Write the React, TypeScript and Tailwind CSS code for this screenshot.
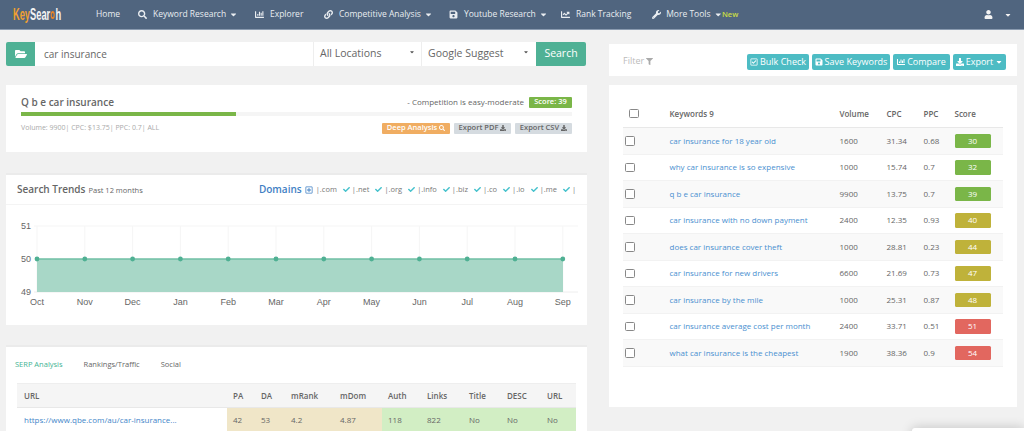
import React from "react";
import {
  FaCaretDown,
  FaChartBar,
  FaChartLine,
  FaCheck,
  FaDownload,
  FaFilter,
  FaFolderOpen,
  FaLink,
  FaRegCheckSquare,
  FaRegPlusSquare,
  FaSave,
  FaSearch,
  FaUser,
  FaWrench,
} from "react-icons/fa";

const keywords = [
  ["car insurance for 18 year old", "1600", "31.34", "0.68", "30", "bg-[#7ab648]"],
  ["why car insurance is so expensive", "1000", "15.74", "0.7", "32", "bg-[#7ab648]"],
  ["q b e car insurance", "9900", "13.75", "0.7", "39", "bg-[#7ab648]"],
  ["car insurance with no down payment", "2400", "12.35", "0.93", "40", "bg-[#bfb23a]"],
  ["does car insurance cover theft", "1000", "28.81", "0.23", "44", "bg-[#bfb23a]"],
  ["car insurance for new drivers", "6600", "21.69", "0.73", "47", "bg-[#bfb23a]"],
  ["car insurance by the mile", "1000", "25.31", "0.87", "48", "bg-[#bfb23a]"],
  ["car insurance average cost per month", "2400", "33.71", "0.51", "51", "bg-[#e2675f]"],
  ["what car insurance is the cheapest", "1900", "38.36", "0.9", "54", "bg-[#e2675f]"],
];

const months = ["Oct", "Nov", "Dec", "Jan", "Feb", "Mar", "Apr", "May", "Jun", "Jul", "Aug", "Sep"];
const domains = [".com", ".net", ".org", ".info", ".biz", ".co", ".io", ".me"];

const serpCols = [
  ["PA", "w-[28px]", "42", "bg-[#f0e6c8]"],
  ["DA", "w-[30px]", "53", "bg-[#f0e6c8]"],
  ["mRank", "w-[49px]", "4.2", "bg-[#f0e6c8]"],
  ["mDom", "w-[48px]", "4.87", "bg-[#f0e6c8]"],
  ["Auth", "w-[39px]", "118", "bg-[#d2eec4]"],
  ["Links", "w-[42px]", "822", "bg-[#d2eec4]"],
  ["Title", "w-[38px]", "No", "bg-[#d2eec4]"],
  ["DESC", "w-[40px]", "No", "bg-[#d2eec4]"],
  ["URL", "w-[35px]", "No", "bg-[#d2eec4]"],
];

function NavItem({ icon, label, caret, className }: { icon?: React.ReactNode; label: string; caret?: boolean; className: string }) {
  return (
    <div className={"flex items-center whitespace-nowrap text-[8.5px] text-[#e9edf1] " + className}>
      {icon && <span className="w-[15px] text-[9px] flex">{icon}</span>}
      <span>{label}</span>
      {caret && <FaCaretDown className="ml-[3px] text-[9px]" />}
    </div>
  );
}

function ToolButton({ icon, label, caret, className }: { icon: React.ReactNode; label: string; caret?: boolean; className: string }) {
  return (
    <button className={"h-[16px] rounded-[2px] bg-[#4dbcc4] text-white text-[9px] whitespace-nowrap flex items-center justify-center gap-[2px] " + className}>
      {icon}
      <span>{label}</span>
      {caret && <FaCaretDown className="text-[8px]" />}
    </button>
  );
}

function TrendChart() {
  const xs = months.map((_, i) => 31 + i * 47.8);
  return (
    <svg width="581" height="121" className="block">
      {xs.map((x) => (
        <line key={x} x1={x} x2={x} y1="21" y2="87" stroke="#f5f5f5" />
      ))}
      <line x1="28" x2="572" y1="21" y2="21" stroke="#f5f5f5" />
      <line x1="28" x2="572" y1="87" y2="87" stroke="#eeeeee" />
      <rect x="31" y="54" width="526" height="33" fill="#a8d7c7" />
      <line x1="31" x2="557" y1="54" y2="54" stroke="#6fbfa5" strokeWidth="1.5" />
      {xs.map((x) => (
        <circle key={x} cx={x} cy="54" r="2.4" fill="#4fb093" />
      ))}
      {[["51", 21], ["50", 54], ["49", 87]].map(([t, y]) => (
        <text key={t} x="25" y={Number(y) + 3} textAnchor="end" fontSize="9" fill="#666" fontFamily="Liberation Sans">
          {t}
        </text>
      ))}
      {months.map((m, i) => (
        <text key={m} x={xs[i]} y="100" textAnchor="middle" fontSize="9" fill="#666" fontFamily="Liberation Sans">
          {m}
        </text>
      ))}
    </svg>
  );
}

export default function App() {
  return (
    <div className="relative h-screen overflow-hidden bg-[#f1f1f1] font-['Open_Sans',sans-serif] text-[#666]">
      {/* top bar */}
      <div className="h-[30px] bg-[#50657f] border-b border-[#8a9bb0] flex items-center relative">
        <div className="ml-[13px] w-[83px] h-[20px] font-['Liberation_Sans',sans-serif] font-bold text-[16px]">
          <div className="flex items-center h-full origin-left scale-x-[0.58]">
            <span className="text-[#f0a030]">Key</span>
            <span className="text-[#f4f4f4]">Sear</span>
            <span className="w-[14px] h-[8px] rounded-full border-2 border-[#e8852b] mx-[1px]" />
            <span className="text-[#f4f4f4]">h</span>
          </div>
        </div>
        <NavItem label="Home" className="w-[42px]" />
        <NavItem icon={<FaSearch />} label="Keyword Research" caret className="w-[117px]" />
        <NavItem icon={<FaChartBar />} label="Explorer" className="w-[69px]" />
        <NavItem icon={<FaLink />} label="Competitive Analysis" caret className="w-[125px]" />
        <NavItem icon={<FaSave />} label="Youtube Research" caret className="w-[112px]" />
        <NavItem icon={<FaChartLine />} label="Rank Tracking" className="w-[91px]" />
        <NavItem icon={<FaWrench />} label="More Tools" caret className="w-[70px]" />
        <span className="text-[7.5px] font-semibold text-[#c9dc45]">New</span>
        <div className="ml-auto mr-[12px] flex items-center gap-[11px] text-[#f2f2f2]">
          <FaUser className="text-[9px]" />
          <FaCaretDown className="text-[8px]" />
        </div>
      </div>

      <div className="flex pl-[6px]">
        {/* left column */}
        <div className="w-[581px]">
          <div className="mt-[12px] h-[24px] flex text-[10.5px]">
            <div className="w-[29px] bg-[#4fb195] rounded-l-[2px] flex items-center justify-center text-white text-[12px]">
              <FaFolderOpen />
            </div>
            <div className="w-[278px] bg-white pl-[9px] flex items-center text-[10px] text-[#666]">car insurance</div>
            <div className="w-[108px] bg-white border-l border-[#eee] pl-[6px] pr-[6px] flex items-center justify-between">
              <span>All Locations</span>
              <FaCaretDown className="text-[6px] mb-[5px] text-[#555]" />
            </div>
            <div className="w-[115px] bg-white border-l border-[#eee] pl-[6px] pr-[7px] flex items-center justify-between">
              <span>Google Suggest</span>
              <FaCaretDown className="text-[6px] mb-[5px] text-[#555]" />
            </div>
            <button className="w-[50px] bg-[#4fb195] rounded-r-[2px] text-white text-[10.5px]">Search</button>
          </div>

          {/* keyword summary */}
          <div className="mt-[19px] h-[67px] bg-white px-[15px] pt-[10px] relative">
            <div className="h-[14px] flex items-center justify-between">
              <span className="text-[10px] font-semibold">Q b e car insurance</span>
              <div className="flex items-center gap-[5px]">
                <span className="text-[8px]">- Competition is easy-moderate</span>
                <span className="w-[43px] h-[11px] rounded-[1px] bg-[#7ab648] text-white text-[7.5px] font-semibold flex items-center justify-center">
                  Score: 39
                </span>
              </div>
            </div>
            <div className="mt-[3px] h-[3.5px] bg-[#f5f5f5]">
              <div className="h-full w-[215px] bg-[#7ab648]" />
            </div>
            <div className="mt-[7px] flex items-center justify-between">
              <span className="text-[7px] text-[#aaa]">Volume: 9900| CPC: $13.75| PPC: 0.7| ALL</span>
              <div className="flex gap-[4px] text-[7.5px] font-semibold">
                <span className="w-[68px] h-[11px] rounded-[1px] bg-[#f0ad62] text-white flex items-center justify-center gap-[2px]">
                  Deep Analysis <FaSearch className="text-[6px]" />
                </span>
                <span className="w-[57px] h-[11px] rounded-[1px] bg-[#d5dbe0] flex items-center justify-center gap-[2px]">
                  Export PDF <FaDownload className="text-[6px]" />
                </span>
                <span className="w-[57px] h-[11px] rounded-[1px] bg-[#d5dbe0] flex items-center justify-center gap-[2px]">
                  Export CSV <FaDownload className="text-[6px]" />
                </span>
              </div>
            </div>
          </div>

          {/* search trends */}
          <div className="mt-[21px] h-[152px] bg-white border-t-2 border-[#ebebeb]">
            <div className="h-[30px] border-b border-[#f4f4f4] flex items-center justify-between pl-[11px] pr-[11px]">
              <div className="flex items-baseline gap-[3px]">
                <span className="text-[10px] font-semibold">Search Trends</span>
                <span className="text-[7.5px]">Past 12 months</span>
              </div>
              <div className="flex items-center text-[7.5px] text-[#777]">
                <span className="text-[10px] font-semibold text-[#3f7fc4] mr-[3px]">Domains</span>
                <FaRegPlusSquare className="text-[8px] text-[#3f7fc4] mr-[3px]" />
                {domains.map((d) => (
                  <span key={d} className="flex items-center mr-[2px]">
                    |{d}
                    <FaCheck className="ml-[6px] text-[7px] text-[#45c1cc]" />
                  </span>
                ))}
                <span>|</span>
              </div>
            </div>
            <TrendChart />
          </div>

          {/* serp analysis */}
          <div className="mt-[20px] bg-white border-t-2 border-[#ebebeb] pl-[11px] h-[90px]">
            <div className="h-[36px] -ml-[2px] flex items-center gap-[21px] text-[7.5px] font-medium">
              <span className="text-[#45b494]">SERP Analysis</span>
              <span>Rankings/Traffic</span>
              <span>Social</span>
            </div>
            <div className="w-[559px] border-t border-[#eee]">
              <div className="flex h-[24px] bg-[#f5f5f5] border-b border-[#e8e8e8] text-[8px] font-semibold items-center">
                <div className="w-[210px] pl-[7px]">URL</div>
                {serpCols.map(([name, w]) => (
                  <div key={name} className={w + " pl-[6px]"}>
                    {name}
                  </div>
                ))}
              </div>
              <div className="flex h-[24px] text-[8px]">
                <div className="w-[210px] pl-[7px] flex items-center text-[#3f86c9]">https://www.qbe.com/au/car-insurance...</div>
                {serpCols.map(([name, w, value, bg]) => (
                  <div key={name} className={w + " " + bg + " pl-[6px] flex items-center"}>
                    {value}
                  </div>
                ))}
              </div>
            </div>
          </div>
        </div>

        {/* right column */}
        <div className="w-[408px] ml-[22px]">
          <div className="mt-[14px] h-[32px] bg-white flex items-center justify-between pt-[2px] pl-[14px] pr-[11px]">
            <div className="flex items-center gap-[2px] text-[9px] text-[#bbb]">
              Filter <FaFilter className="text-[7px] text-[#aaa]" />
            </div>
            <div className="flex gap-[3px] mt-[2px]">
              <ToolButton icon={<FaRegCheckSquare className="text-[8px]" />} label="Bulk Check" className="w-[62px]" />
              <ToolButton icon={<FaSave className="text-[8px]" />} label="Save Keywords" className="w-[78px]" />
              <ToolButton icon={<FaChartBar className="text-[8px]" />} label="Compare" className="w-[57px]" />
              <ToolButton icon={<FaDownload className="text-[8px]" />} label="Export" caret className="w-[53px]" />
            </div>
          </div>

          <div className="mt-[9px] h-[322px] bg-white px-[14px] pt-[15px]">
            <div className="flex items-center h-[28px] border-b border-[#e8e8e8] text-[8px] font-semibold pr-[12px]">
              <span className="ml-[6px] w-[9.5px] h-[9.5px] rounded-[1.5px] border border-[#888] bg-white" />
              <span className="ml-[31px] w-[170px]">Keywords 9</span>
              <span className="w-[47px]">Volume</span>
              <span className="w-[37px]">CPC</span>
              <span className="w-[31px]">PPC</span>
              <span>Score</span>
            </div>
            {keywords.map(([name, volume, cpc, ppc, score, bg], i) => (
              <div
                key={name}
                className={"flex items-center h-[26.5px] border-b border-[#f2f2f2] text-[8px] " + (i % 2 === 0 ? "bg-[#f9f9f9]" : "bg-white")}
              >
                <span className="ml-[2px] w-[9.5px] h-[9.5px] rounded-[1.5px] border border-[#888] bg-white" />
                <span className="ml-[35px] w-[170px] text-[#4a90d0]">{name}</span>
                <span className="w-[47px]">{volume}</span>
                <span className="w-[37px]">{cpc}</span>
                <span className="w-[31px]">{ppc}</span>
                <span className={"w-[36px] h-[14.5px] rounded-[1.5px] text-white flex items-center justify-center " + bg}>{score}</span>
              </div>
            ))}
          </div>
        </div>
      </div>

      {/* chat widget peeking in at the bottom */}
      <div className="absolute left-[912px] top-[428px] w-[112px] h-[20px] bg-white rounded-tl-[3px] shadow-[0_0_12px_rgba(0,0,0,0.2)]" />
    </div>
  );
}
